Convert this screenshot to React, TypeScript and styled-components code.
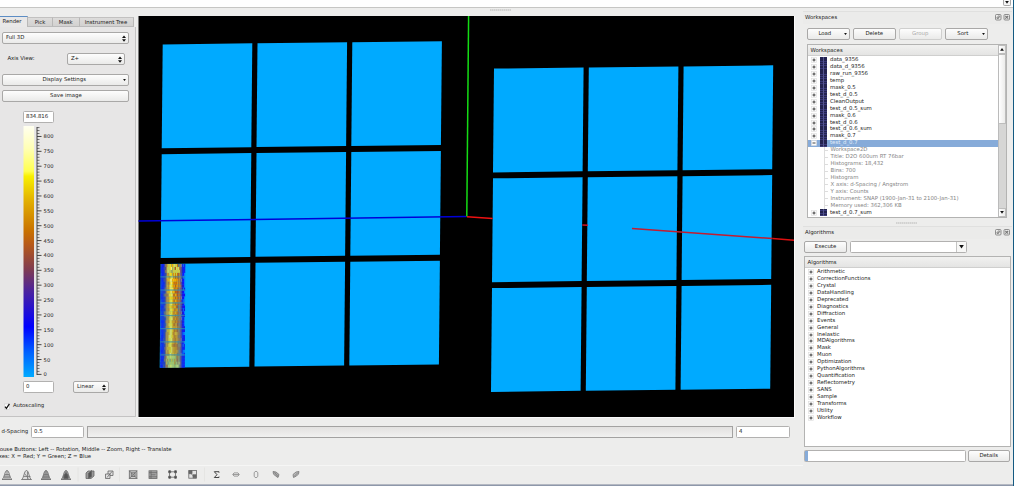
import React from "react";
import styled, { createGlobalStyle } from "styled-components";

const GlobalStyle = createGlobalStyle`
  * { box-sizing: border-box; }
  body { margin: 0; overflow: hidden; }
`;

const Window = styled.div`
  display: flex;
  width: 1014px;
  height: 486px;
  background: #ededec;
  font: 5.38px/8px "DejaVu Sans", sans-serif;
  color: #222;
  white-space: nowrap;
  text-rendering: geometricPrecision;
  overflow: hidden;
`;
const Content = styled.div`
  flex: 1;
  min-width: 0;
  display: flex;
  flex-direction: column;
`;
const EdgeStrip = styled.div`
  width: 1px;
  background: #145a82;
`;
const BottomStrip = styled.div`
  height: 2px;
  border-top: 1px solid #b4b8c2;
  background: #8e98aa;
`;
const TopBar = styled.div`
  height: 8px;
  background: #fff;
  border-bottom: 1px solid #c6c6c4;
  display: flex;
  justify-content: flex-end;
  padding-right: 2px;
`;
const TopArrow = styled.div`
  width: 8px;
  height: 6px;
  border: 1px solid #aaa;
  border-top: 0;
  border-radius: 0 0 2px 2px;
  background: #f6f6f6;
  display: flex;
  align-items: center;
  justify-content: center;
`;
const Body = styled.div`
  flex: 1;
  min-height: 0;
  display: flex;
`;
const Main = styled.div`
  width: 803px;
  display: flex;
  flex-direction: column;
`;
const Grip = styled.div<{ $h: number; $left: number }>`
  height: ${(p) => p.$h}px;
  padding: 1px 0 0 ${(p) => p.$left}px;
  &::before {
    content: "";
    display: block;
    width: 21px;
    height: 2px;
    background: repeating-linear-gradient(90deg, #d2d2d1 0 1px, #dededd 1px 2px);
  }
`;
const ViewRow = styled.div`
  display: flex;
  height: 401px;
`;
const Controls = styled.div`
  width: 138px;
  display: flex;
  flex-direction: column;
`;
const Tabs = styled.div`
  height: 11px;
  display: flex;
  align-items: flex-end;
`;
const Tab = styled.div<{ $w: number; $active?: boolean }>`
  width: ${(p) => p.$w}px;
  height: ${(p) => (p.$active ? 11 : 10)}px;
  line-height: ${(p) => (p.$active ? 11 : 10)}px;
  text-align: center;
  padding-right: ${(p) => (p.$active ? 3 : 0)}px;
  background: ${(p) => (p.$active ? "#e9e8e8" : "linear-gradient(#dddcdb, #d2d1d0)")};
  border: 1px solid #b9b8b7;
  border-left: 0;
  border-bottom: ${(p) => (p.$active ? "0" : "1px solid #bbb")};
  border-top: 1px solid ${(p) => (p.$active ? "#5c8dc4" : "#c2c1c0")};
`;
const Pane = styled.div`
  flex: 1;
  width: 136px;
  background: #e7e6e6;
  border-right: 1px solid #c4c3c3;
  border-bottom: 1px solid #c4c3c3;
  padding: 5px 0 0 2.4px;
`;
const Button = styled.div<{ $w: number; $h?: number; $muted?: boolean; $align?: string }>`
  position: relative;
  width: ${(p) => p.$w}px;
  height: ${(p) => p.$h ?? 12}px;
  flex: none;
  display: flex;
  align-items: center;
  justify-content: ${(p) => p.$align ?? "center"};
  padding: 0 2.5px;
  border: 1px solid ${(p) => (p.$muted ? "#cfcfce" : "#a9a8a7")};
  border-radius: 2px;
  background: linear-gradient(#fdfdfd, #eaeae9);
  color: ${(p) => (p.$muted ? "#aaa" : "#222")};
`;
const Marker = styled.div`
  position: absolute;
  right: 2px;
  top: 0;
  bottom: 0;
  display: flex;
  align-items: center;
`;
const Field = styled.div<{ $w: number; $h?: number }>`
  width: ${(p) => p.$w}px;
  height: ${(p) => p.$h ?? 12}px;
  flex: none;
  display: flex;
  align-items: center;
  padding-left: 2px;
  border: 1px solid #b2b1b0;
  border-radius: 1.5px;
  background: #fff;
`;
const ComboField = styled(Field)`
  justify-content: flex-end;
`;
const ComboArrow = styled.div`
  width: 10px;
  height: 100%;
  border-left: 1px solid #c4c4c3;
  background: #f7f7f6;
  display: flex;
  align-items: center;
  justify-content: center;
`;
const AxisRow = styled.div`
  display: flex;
  align-items: center;
  padding-left: 5px;
  margin: 9px 0;
  & > span { width: 60px; }
`;
const Stack = styled.div`
  display: flex;
  flex-direction: column;
  gap: 4px;
`;
const Legend = styled.div`
  padding: 9px 0 0 20.6px;
`;
const Scale = styled.svg`
  display: block;
  margin: 3px 0 4px;
`;
const ScaleFoot = styled.div`
  display: flex;
  gap: 19px;
`;
const Check = styled.div`
  display: flex;
  align-items: center;
  gap: 2.5px;
  padding: 9px 0 0 2px;
`;
const Scene = styled.svg`
  display: block;
  flex: none;
  width: 657px;
  height: 402px;
  border-right: 1px solid #fafafa;
  border-bottom: 1px solid #fafafa;
`;
const RangeRow = styled.div`
  display: flex;
  align-items: center;
  height: 30px;
  padding-left: 1.5px;
  & > span { width: 29.5px; }
`;
const Track = styled.div`
  width: 646px;
  height: 12px;
  margin: 0 3px;
  border: 1px solid #a3a2a1;
  background: linear-gradient(#e2e1e0, #f1f1f0);
`;
const Hints = styled.div`
  height: 18px;
  line-height: 6.6px;
  margin-left: -5px;
`;
const Tools = styled.svg`
  display: block;
  background: linear-gradient(#f6f6f5, #f6f6f5) 0 0 / 100% 1px no-repeat;
`;
const Dock = styled.div`
  width: 209px;
  display: flex;
  flex-direction: column;
`;
const DockTitle = styled.div`
  height: 13px;
  display: flex;
  align-items: center;
  justify-content: space-between;
  border-top: 1px solid #e0e0df;
  padding: 0 2px 1px 2px;
  background: #ebebea;
`;
const ButtonRow = styled.div<{ $gap: number }>`
  display: flex;
  gap: ${(p) => p.$gap}px;
`;
const TreeBox = styled.div<{ $w: number; $h: number }>`
  width: ${(p) => p.$w}px;
  height: ${(p) => p.$h}px;
  border: 1px solid #b3b3b2;
  background: #fff;
  display: flex;
  overflow: hidden;
`;
const TreeList = styled.div`
  flex: 1;
  min-width: 0;
`;
const TreeHead = styled.div`
  height: 11px;
  line-height: 12px;
  padding-left: 2.5px;
  background: linear-gradient(#f1f1f0, #e4e4e3);
  border-bottom: 1px solid #cfcfce;
`;
const Rows = styled.div`
  padding-top: 0.6px;
`;
const Row = styled.div<{ $selected?: boolean; $detail?: boolean }>`
  height: 6.943px;
  line-height: 8px;
  display: flex;
  align-items: center;
  gap: 3px;
  padding-left: ${(p) => (p.$detail ? 22.5 : 3)}px;
  color: ${(p) => (p.$selected ? "#e4eefa" : p.$detail ? "#858585" : "#222")};
  background: ${(p) =>
    p.$selected
      ? "#86abd9"
      : p.$detail
        ? "linear-gradient(#ddd, #ddd) 16px 0 / 1px 100% no-repeat, linear-gradient(#ddd, #ddd) 16px 50% / 4px 1px no-repeat"
        : "none"};
`;
const TableIcon = styled.i`
  width: 7px;
  height: 7px;
  background:
    linear-gradient(#55558f, #55558f) 50% 0 / 1px 100% no-repeat,
    repeating-linear-gradient(#23234f 0 1.5px, #383878 1.5px 2.4px);
`;
const ScrollBar = styled.div`
  width: 8px;
  border-left: 1px solid #bbb;
  background: #d6d6d5;
  display: flex;
  flex-direction: column;
`;
const ScrollPart = styled.div<{ $h: number }>`
  height: ${(p) => p.$h}px;
  border: 1px solid #bdbdbc;
  border-left: 0;
  border-radius: 1px;
  background: linear-gradient(90deg, #fff, #ececeb);
  display: flex;
  align-items: center;
  justify-content: center;
`;
const Spacer = styled.div`
  flex: 1;
`;
const Progress = styled(Field)`
  padding: 0;
  &::before {
    content: "";
    width: 3px;
    height: 100%;
    background: #86abd9;
  }
`;

const Arrow = ({ up, w = 4 }: { up?: boolean; w?: number }) => (
  <svg width={w} height={w * 0.7} viewBox="0 0 4 3">
    <path d={up ? "M0 3L2 0L4 3Z" : "M0 0L2 3L4 0Z"} fill="#111" />
  </svg>
);
const Updown = () => (
  <svg width="4" height="7" viewBox="0 0 4 7">
    <path d="M0 3L2 0.4L4 3ZM0 4.2L2 6.8L4 4.2Z" fill="#111" />
  </svg>
);
const Expander = ({ open }: { open?: boolean }) => (
  <svg width="6" height="6" viewBox="0 0 6 6">
    <rect x="0.5" y="0.5" width="5" height="5" fill="#fcfcfc" stroke="#dcdcdc" strokeWidth="0.6" />
    <path d={open ? "M1.5 3H4.5" : "M1.5 3H4.5M3 1.5V4.5"} stroke="#333" strokeWidth="0.9" />
  </svg>
);
const DockButtons = () => (
  <svg width="15" height="7" viewBox="0 0 15 7" fill="none" stroke="#777" strokeWidth="0.8">
    <rect x="0.5" y="0.5" width="5.5" height="5.5" rx="1" />
    <path d="M2 4.5V3H3.5V4.5ZM3 2H4.7V3.6" />
    <rect x="9" y="0.5" width="5.5" height="5.5" rx="1" />
    <path d="M10.3 1.8L13.2 4.7M13.2 1.8L10.3 4.7" strokeWidth="1.1" />
  </svg>
);

/* Colour scale: 0 sits at y=248.4 and every 50 units spans 14.87px */
const valueY = (v: number) => 248.4 - (v / 50) * 14.87;
const ColourScale = () => (
  <Scale width="40" height="251" viewBox="0 0 40 251">
    <defs>
      <linearGradient id="scale" x1="0" y1="0" x2="0" y2="1">
        <stop offset="0" stopColor="#fffff0" />
        <stop offset="0.09" stopColor="#ffffb4" />
        <stop offset="0.18" stopColor="#ffff50" />
        <stop offset="0.2" stopColor="#f8f000" />
        <stop offset="0.3" stopColor="#e2ae00" />
        <stop offset="0.42" stopColor="#c87000" />
        <stop offset="0.47" stopColor="#b85a18" />
        <stop offset="0.57" stopColor="#803c50" />
        <stop offset="0.66" stopColor="#4a22a0" />
        <stop offset="0.8" stopColor="#0000ff" />
        <stop offset="0.9" stopColor="#0060ff" />
        <stop offset="1" stopColor="#00aaff" />
      </linearGradient>
    </defs>
    <rect x="0.5" y="0" width="10.5" height="251" fill="url(#scale)" />
    <path d="M14 1V249" stroke="#333" strokeWidth="0.9" />
    {Array.from({ length: 84 }, (_, i) => (
      <path
        key={i}
        d={`M14 ${valueY(i * 10)}H${i % 5 ? 16.5 : 18.5}`}
        stroke="#333"
        strokeWidth={i % 5 ? 0.65 : 0.9}
      />
    ))}
    {Array.from({ length: 17 }, (_, i) => (
      <text key={i} x="20.6" y={valueY(i * 50) + 2} fontSize="5.2" fill="#222">
        {i * 50}
      </text>
    ))}
  </Scale>
);

const cells = [0, 1, 2].flatMap((row) => [0, 1, 2].map((col) => [col, row]));
const Bank = ({ x, y }: { x: number; y: number }) => (
  <g fill="#00aaff">
    {cells.map(([c, r]) => (
      <path
        key={`${c}${r}`}
        d={`M${x + 94.8 * c - r} ${y - 1.1 * c + 109.75 * r}l89.6 -1.05l-1 103.8l-89.6 1.05z`}
      />
    ))}
  </g>
);

const columnTones = [
  ["#1420e0", "#2030c8", "#0838f0"], ["#1010f0", "#1c1ce0", "#1030e0"],
  ["#1010f0", "#2828b8", "#1818e0"], ["#2828c0", "#1818e0", "#444890"],
  ["#3434a0", "#705878", "#887050"], ["#a06040", "#906850", "#505088"],
  ["#d8a020", "#c07028", "#e0b828"], ["#c88020", "#f0b800", "#a87838"],
  ["#f0b000", "#ffd820", "#e08c00"], ["#ffdc10", "#f8e860", "#f0c000"],
  ["#ffee40", "#ffd400", "#fff080"], ["#ffd000", "#f0a800", "#ffe850"],
  ["#e09000", "#d07800", "#ffc000"], ["#f0a800", "#c86000", "#d07010"],
  ["#d08000", "#b85810", "#f0b000"], ["#e09000", "#c86808", "#e8b020"],
  ["#c87008", "#a85028", "#d89818"], ["#986048", "#a87838", "#607080"],
  ["#b07838", "#808070", "#c08828"], ["#805870", "#6060a0", "#a07850"],
  ["#604888", "#4848a0", "#7878a0"], ["#1818e0", "#2020c0", "#1030f0"],
  ["#1010ff", "#0868f0", "#1818e0"], ["#1515e8", "#0878ff", "#1010f0"],
];
const ends = ["#c8cc48", "#a0a858", "#d8d860"];
const noise = (a: number, b: number) => {
  const s = Math.sin(a * 12.9898 + b * 78.233) * 43758.5453;
  return s - Math.floor(s);
};
const HotStrip = () => (
  <g>
    {columnTones.flatMap((tones, c) =>
      Array.from({ length: 35 }, (_, r) => {
        const edge = (r < 4 || r > 30) && c > 5 && c < 19 && noise(c, r + 9) > 0.35;
        const palette = edge ? ends : tones;
        const n = noise(c + 1, r + 1);
        return (
          <rect
            key={`${c}-${r}`}
            x={160.7 + c * 1.02 - r * 0.015}
            y={264 + r * 2.96}
            width="1.1"
            height="3.05"
            fill={palette[Math.floor(n * n * 3)]}
          />
        );
      })
    )}
    {[276.9, 290, 303, 315.7, 328.7, 341.9, 354.9].map((y) => (
      <path key={y} d={`M160.5 ${y}H185`} stroke="#3290b0" strokeWidth="0.9" />
    ))}
  </g>
);

const Instrument = () => (
  <Scene viewBox="138 16 656 401" preserveAspectRatio="none">
    <rect x="138" y="16" width="656" height="401" fill="#000" />
    <path d="M138.4 16V417" stroke="#aaa" strokeWidth="0.8" />
    <Bank x={162.7} y={44.4} />
    <Bank x={494} y={68.6} />
    <HotStrip />
    <g fill="none" strokeWidth="1.5">
      <path d="M138.5 221L466.5 216.5" stroke="#0000d8" />
      <path d="M468.6 16L466.8 216.5" stroke="#14dc14" />
      <path d="M467 216.7L492.6 218.4" stroke="#ee1111" />
      <path d="M582.3 225L588 225.3" stroke="#cc1428" />
      <path d="M632 228.5L772.5 238.6" stroke="#c41c30" />
      <path d="M772.5 238.6L794 240.2" stroke="#dd1010" />
    </g>
  </Scene>
);

const Peak = ({ x, kind }: { x: number; kind: number }) => (
  <g transform={`translate(${x} 0)`}>
    <path
      d="M-5 5C-2.5 4 -2.5 -4 0 -4S2.5 4 5 5Z"
      fill={kind > 1 ? "#aaa" : "#ddd"}
      stroke="#666"
    />
    <path d={kind === 1 ? "M-3 2H4M-2 -1L2 4M1 -3V5" : "M-3.5 2.5H3.5M-2 0H2M0 -4V5M-2 0V5M2 0V5"} stroke="#777" />
    {kind === 3 && <path d="M-2 1L0 -2L2 1V4H-2Z" fill="#555" />}
  </g>
);
const ToolIcons = () => (
  <Tools width="803" height="19" viewBox="0 465 803 19">
    <g transform="translate(0 474.5)" fill="none" stroke="#666" strokeWidth="0.8">
      <Peak x={7} kind={0} />
      <Peak x={26.5} kind={1} />
      <Peak x={46} kind={2} />
      <Peak x={66} kind={3} />
      <path d="M78 -7V7M119.5 -7V7M204.5 -7V7" stroke="#e2e2e1" />
      <path d="M86 -1.5L88 -3.5H94V1.5L91 4H86Z" fill="#999" />
      <path d="M88.5 4V-1L91.5 -4V2Z" fill="#555" />
      <path d="M105.5 -0.5H110V4H105.5ZM108 -0.5V-3.5H113V1H110" fill="#e0e0e0" />
      <path d="M107 3L112 -3" />
      <rect x="129.3" y="-3.7" width="7.6" height="7.6" fill="#ccc" />
      <path d="M131.3 -1.7H135V2H131.3ZM129.3 -3.7L137 4M137 -3.7L129.3 4" />
      <rect x="149" y="-3.7" width="8" height="7.6" fill="#aaa" />
      <path d="M149 -1.8H157M151 0.3H155.5M149 2.3H157M151 -3.7V4" />
      <path d="M169.5 -4V4M175.5 -4V4M168.5 -2.7H176.5M168.5 2.7H176.5" />
      <path d="M168.7 -3.7h2v2h-2zM174.5 -3.7h2v2h-2zM168.7 1.7h2v2h-2zM174.5 1.7h2v2h-2z" fill="#444" />
      <rect x="188.8" y="-4" width="7.7" height="7.7" fill="#e4e4e4" />
      <path d="M189 -3.8h3v3h-3zM193 0.3h3v3h-3z" fill="#666" />
      <path d="M191 -1L194 2" />
      <path d="M219 -1.8V-2.8H214.3L217 0.2L214.3 3H219V2" stroke="#444" strokeWidth="1" />
      <path d="M232.7 0L234 -1.6H238L239.3 0L238 1.6H234ZM233 0H239" stroke="#888" />
      <path d="M256 -3.4L257.8 -2V2L256 3.4L254.2 2V-2Z" stroke="#888" />
      <path d="M273 -3L276 -2.5L279 0L278 3L275.5 1.5L273.5 -0.5ZM274.5 -2L278 2" stroke="#777" fill="#aaa" />
      <path d="M299 -3L296 -2.5L293 0L293.5 3L296.5 1.5L298.5 -0.5ZM298 -2L294 2" stroke="#777" fill="#bbb" />
    </g>
  </Tools>
);

const before = [
  "data_9356", "data_d_9356", "raw_run_9356", "temp", "mask_0.5", "test_d_0.5", "CleanOutput",
  "test_d_0.5_sum", "mask_0.6", "test_d_0.6", "test_d_0.6_sum", "mask_0.7",
];
const details = [
  "Workspace2D", "Title: D2O 600um RT 76bar", "Histograms: 18,432", "Bins: 700", "Histogram",
  "X axis: d-Spacing / Angstrom", "Y axis: Counts",
  "Instrument: SNAP (1900-Jan-31 to 2100-Jan-31)", "Memory used: 362,306 KB",
];
const algorithms = [
  "Arithmetic", "CorrectionFunctions", "Crystal", "DataHandling", "Deprecated", "Diagnostics",
  "Diffraction", "Events", "General", "Inelastic", "MDAlgorithms", "Mask", "Muon", "Optimization",
  "PythonAlgorithms", "Quantification", "Reflectometry", "SANS", "Sample", "Transforms", "Utility",
  "Workflow",
];

const WorkspaceRow = ({ name, open }: { name: string; open?: boolean }) => (
  <Row $selected={open}>
    <Expander open={open} />
    <TableIcon />
    <span>{name}</span>
  </Row>
);

const WorkspaceArea = styled.div`
  padding: 4px 0 0 4px;
  height: 194px;
`;
const WorkspaceTree = styled(TreeBox)`
  margin-top: 4px;
`;
const AlgorithmArea = styled.div`
  padding: 2px 0 0 1px;
  display: flex;
  flex-direction: column;
  gap: 3px;
`;
const DockGap = styled.div`
  height: 3px;
`;

export default function App() {
  return (
    <Window>
      <GlobalStyle />
      <Content>
        <TopBar>
          <TopArrow><Arrow /></TopArrow>
        </TopBar>
        <Body>
          <Main>
            <Grip $h={8} $left={490} />
            <ViewRow>
              <Controls>
                <Tabs>
                  <Tab $w={28} $active>Render</Tab>
                  <Tab $w={25}>Pick</Tab>
                  <Tab $w={26.5}>Mask</Tab>
                  <Tab $w={54}>Instrument Tree</Tab>
                </Tabs>
                <Pane>
                  <Button $w={127} $align="flex-start">Full 3D<Marker><Updown /></Marker></Button>
                  <AxisRow>
                    <span>Axis View:</span>
                    <Button $w={57.5} $align="flex-start">Z+<Marker><Updown /></Marker></Button>
                  </AxisRow>
                  <Stack>
                    <Button $w={127}>Display Settings &nbsp;<Marker><Arrow w={3} /></Marker></Button>
                    <Button $w={127}>Save image</Button>
                  </Stack>
                  <Legend>
                    <Field $w={31.5}>834.816</Field>
                    <ColourScale />
                    <ScaleFoot>
                      <Field $w={31.5}>0</Field>
                      <Button $w={35.5} $align="flex-start">Linear<Marker><Updown /></Marker></Button>
                    </ScaleFoot>
                  </Legend>
                  <Check>
                    <svg width="6" height="7" viewBox="0 0 6 7">
                      <rect x="0.3" y="1" width="5.2" height="5.4" fill="#fff" stroke="#ccc" strokeWidth="0.6" />
                      <path d="M1 3.6L2.4 5.4L5.4 0.8" fill="none" stroke="#111" strokeWidth="1.2" />
                    </svg>
                    Autoscaling
                  </Check>
                </Pane>
              </Controls>
              <Instrument />
            </ViewRow>
            <RangeRow>
              <span>d-Spacing</span>
              <Field $w={53}>0.5</Field>
              <Track />
              <Field $w={54}>4</Field>
            </RangeRow>
            <Hints>
              Mouse Buttons: Left -- Rotation, Middle -- Zoom, Right -- Translate
              <br />
              Axes: X = Red; Y = Green; Z = Blue
            </Hints>
            <ToolIcons />
          </Main>
          <Dock>
            <DockGap />
            <DockTitle>Workspaces<DockButtons /></DockTitle>
            <WorkspaceArea>
              <ButtonRow $gap={3.5}>
                <Button $w={42.5}>Load &nbsp; &nbsp;<Marker><Arrow w={3} /></Marker></Button>
                <Button $w={42.5}>Delete</Button>
                <Button $w={42.5} $muted>Group</Button>
                <Button $w={42.5}>Sort &nbsp; &nbsp;<Marker><Arrow w={3} /></Marker></Button>
              </ButtonRow>
              <WorkspaceTree $w={200} $h={174}>
                <TreeList>
                  <TreeHead>Workspaces</TreeHead>
                  <Rows>
                    {before.map((n) => <WorkspaceRow key={n} name={n} />)}
                    <WorkspaceRow name="test_d_0.7" open />
                    {details.map((d) => <Row key={d} $detail>{d}</Row>)}
                    <WorkspaceRow name="test_d_0.7_sum" />
                  </Rows>
                </TreeList>
                <ScrollBar>
                  <ScrollPart $h={9}><Arrow up /></ScrollPart>
                  <ScrollPart $h={70} />
                  <Spacer />
                  <ScrollPart $h={9}><Arrow /></ScrollPart>
                </ScrollBar>
              </WorkspaceTree>
            </WorkspaceArea>
            <DockGap />
            <Grip $h={5} $left={93} />
            <DockTitle>Algorithms<DockButtons /></DockTitle>
            <AlgorithmArea>
              <ButtonRow $gap={2.5}>
                <Button $w={43}>Execute</Button>
                <ComboField $w={117}><ComboArrow><Arrow w={5} /></ComboArrow></ComboField>
              </ButtonRow>
              <TreeBox $w={207} $h={191}>
                <TreeList>
                  <TreeHead>Algorithms</TreeHead>
                  <Rows>
                    {algorithms.map((a) => <Row key={a}><Expander />{a}</Row>)}
                  </Rows>
                </TreeList>
              </TreeBox>
              <ButtonRow $gap={2}>
                <Progress $w={161.5} />
                <Button $w={42.5}>Details</Button>
              </ButtonRow>
            </AlgorithmArea>
          </Dock>
        </Body>
        <BottomStrip />
      </Content>
      <EdgeStrip />
    </Window>
  );
}
